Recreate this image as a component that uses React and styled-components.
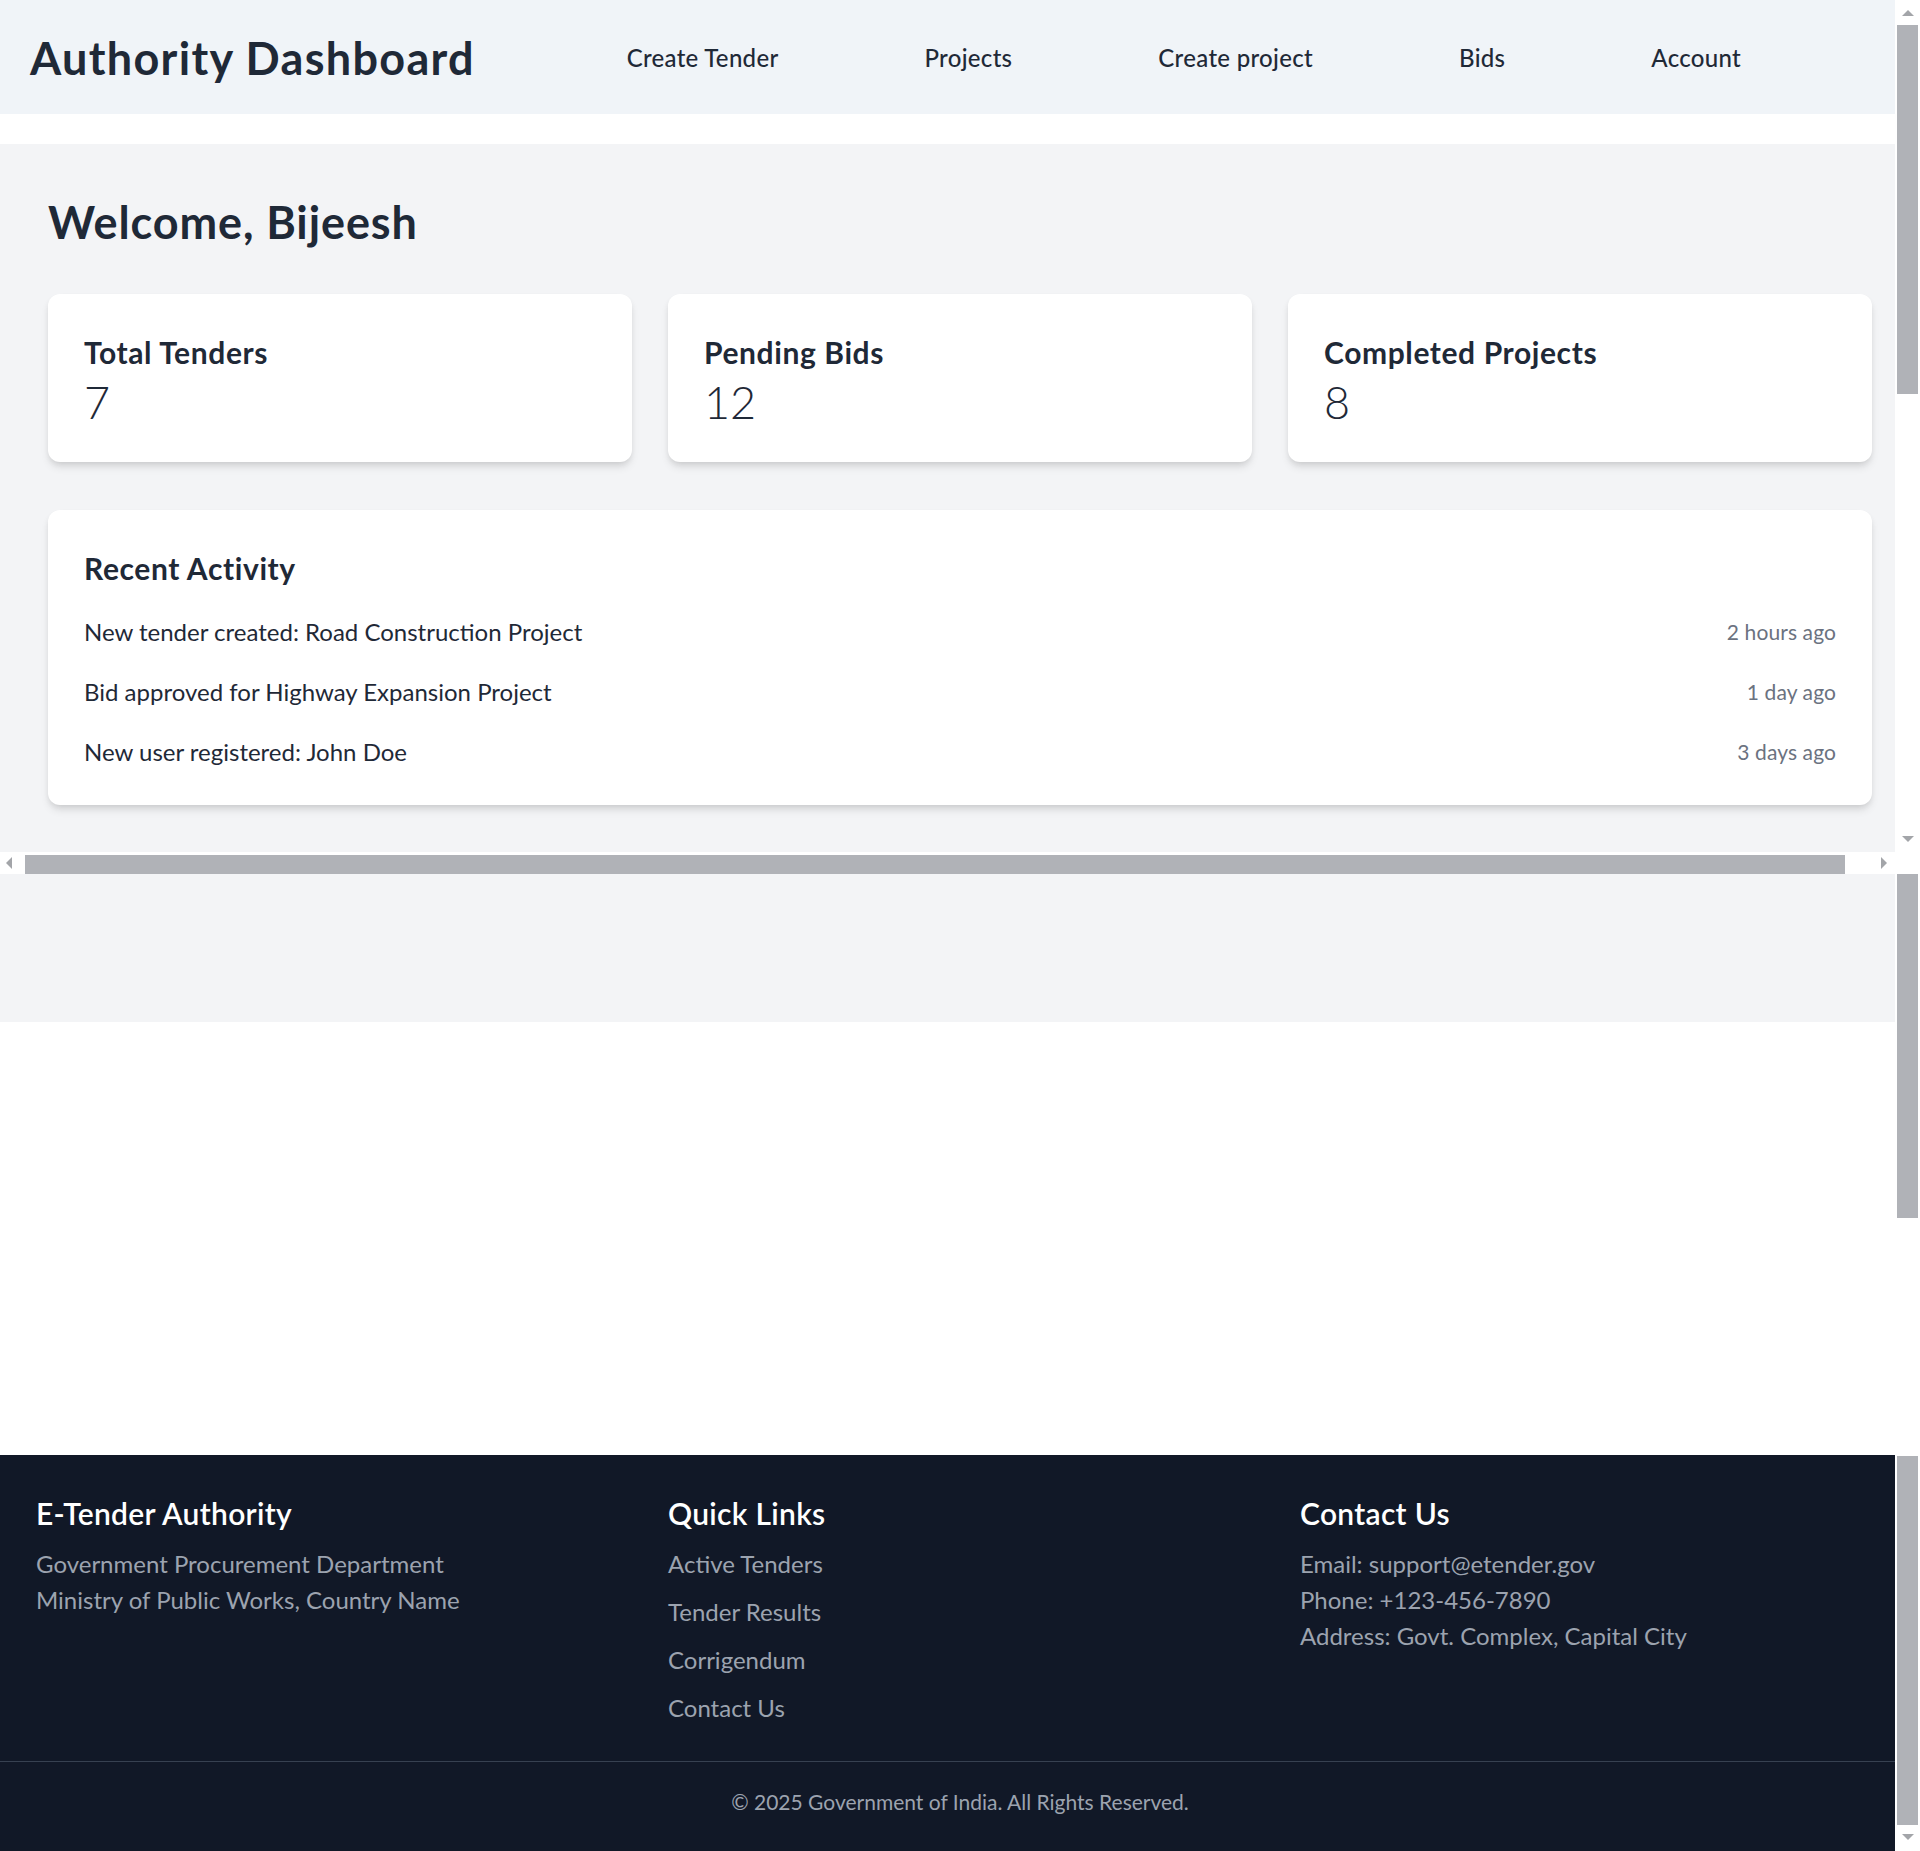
import React from "react";
import styled, { createGlobalStyle } from "styled-components";

const GlobalStyle = createGlobalStyle`
  html, body { margin: 0; padding: 0; background: #ffffff; }
  body {
    font-family: "Segoe UI", Lato, "Noto Sans", sans-serif;
    color: #1f2937;
    overflow: hidden;
  }
  * { box-sizing: border-box; }
  h1, h2, h3, h4, p, ul { margin: 0; padding: 0; }
  ul { list-style: none; }
`;

const Page = styled.div`
  position: relative;
  width: 1920px;
  min-height: 1851px;
  display: flex;
  flex-direction: column;
  overflow: hidden;
`;

const Header = styled.header`
  height: 114px;
  background: #f0f4f8;
  display: flex;
  align-items: center;
  padding-left: 30px;
  padding-top: 2px;
`;

const Title = styled.h1`
  font-size: 45px;
  line-height: 54px;
  font-weight: 700;
  color: #1f2937;
  letter-spacing: 1.3px;
`;

const Nav = styled.nav`
  margin-left: auto;
  padding-right: 179px;
  display: flex;
  gap: 146px;
`;

const NavLink = styled.a`
  font-size: 24px;
  line-height: 36px;
  font-weight: 500;
  color: #1f2937;
  text-decoration: none;
  letter-spacing: 0.3px;
`;

const Main = styled.main`
  margin-top: 30px;
  min-height: 878px;
  background: #f3f4f6;
  padding: 48px;
`;

const Welcome = styled.h2`
  font-size: 45px;
  line-height: 54px;
  font-weight: 700;
  color: #1f2937;
  letter-spacing: 0.9px;
  padding-top: 3px;
  margin-bottom: 45px;
`;

const CardGrid = styled.div`
  display: grid;
  grid-template-columns: repeat(3, 1fr);
  gap: 36px;
  margin-bottom: 48px;
`;

const Card = styled.section`
  background: #ffffff;
  border-radius: 12px;
  box-shadow: 0 6px 9px -1px rgba(0, 0, 0, 0.1), 0 3px 6px -2px rgba(0, 0, 0, 0.1);
  padding: 37px 36px 35px;
`;

const CardTitle = styled.h3`
  font-size: 30px;
  line-height: 42px;
  font-weight: 700;
  color: #1f2937;
  letter-spacing: 0.6px;
`;

const StatValue = styled.p`
  font-size: 45px;
  line-height: 54px;
  font-weight: 300;
  color: #1f2937;
  padding-top: 2px;
  margin-bottom: -2px;
`;

const ActivityList = styled.ul`
  margin-top: 25px;
  display: flex;
  flex-direction: column;
  gap: 24px;
`;

const ActivityRow = styled.li`
  display: flex;
  justify-content: space-between;
  align-items: center;
  height: 36px;
`;

const ActivityText = styled.span`
  font-size: 24px;
  line-height: 36px;
  color: #1f2937;
`;

const ActivityTime = styled.span`
  font-size: 21px;
  line-height: 30px;
  color: #6b7280;
  letter-spacing: 0.1px;
`;

const Footer = styled.footer`
  margin-top: auto;
  background: #111827;
  color: #ffffff;
`;

const FooterGrid = styled.div`
  padding: 37px 36px 0;
  display: grid;
  grid-template-columns: repeat(3, 1fr);
  gap: 48px;
`;

const FooterHeading = styled.h4`
  font-size: 30px;
  line-height: 42px;
  font-weight: 600;
  color: #ffffff;
  margin-bottom: 12px;
  letter-spacing: 0.3px;
`;

const FooterText = styled.p`
  font-size: 24px;
  line-height: 36px;
  color: #9ca3af;
`;

const FooterLinks = styled.ul`
  display: flex;
  flex-direction: column;
  gap: 12px;
`;

const FooterLink = styled.a`
  display: block;
  font-size: 24px;
  line-height: 36px;
  color: #9ca3af;
  text-decoration: none;
`;

const FooterBottom = styled.div`
  margin-top: 35px;
  border-top: 1px solid #374151;
  padding: 25px 0 34px;
  text-align: center;
  font-size: 21px;
  line-height: 30px;
  color: #9ca3af;
`;

/* Browser scrollbar chrome that lies over the page content */
const VRail = styled.div`
  position: absolute;
  top: 0;
  right: 0;
  width: 25px;
  height: 100%;
  background: #ffffff;
`;

const VThumb = styled.div`
  position: absolute;
  left: 2px;
  width: 21px;
  top: ${(p) => p.$top}px;
  height: ${(p) => p.$h}px;
  background: #b0b2b7;
`;

const Arrow = styled.div`
  position: absolute;
  width: 0;
  height: 0;
  left: ${(p) => p.$x}px;
  top: ${(p) => p.$y}px;
  ${(p) =>
    p.$dir === "up"
      ? "border-left: 6px solid transparent; border-right: 6px solid transparent; border-bottom: 6px solid #a3a5a9;"
      : p.$dir === "down"
      ? "border-left: 6px solid transparent; border-right: 6px solid transparent; border-top: 6px solid #a3a5a9;"
      : p.$dir === "left"
      ? "border-top: 6px solid transparent; border-bottom: 6px solid transparent; border-right: 6px solid #a3a5a9;"
      : "border-top: 6px solid transparent; border-bottom: 6px solid transparent; border-left: 6px solid #a3a5a9;"}
`;

const HRail = styled.div`
  position: absolute;
  left: 0;
  top: 852px;
  width: 1895px;
  height: 22px;
  background: #ffffff;
`;

const HThumb = styled.div`
  position: absolute;
  left: 25px;
  top: 3px;
  width: 1820px;
  height: 19px;
  background: #b0b2b7;
`;

const navItems = ["Create Tender", "Projects", "Create project", "Bids", "Account"];

const stats = [
  { label: "Total Tenders", value: 7 },
  { label: "Pending Bids", value: 12 },
  { label: "Completed Projects", value: 8 },
];

const activities = [
  { text: "New tender created: Road Construction Project", time: "2 hours ago" },
  { text: "Bid approved for Highway Expansion Project", time: "1 day ago" },
  { text: "New user registered: John Doe", time: "3 days ago" },
];

const quickLinks = ["Active Tenders", "Tender Results", "Corrigendum", "Contact Us"];

export default function App() {
  return (
    <>
      <GlobalStyle />
      <Page>
        <Header>
          <Title>Authority Dashboard</Title>
          <Nav>
            {navItems.map((n) => (
              <NavLink key={n} href="#">
                {n}
              </NavLink>
            ))}
          </Nav>
        </Header>

        <Main>
          <Welcome>Welcome, Bijeesh</Welcome>
          <CardGrid>
            {stats.map((s) => (
              <Card key={s.label}>
                <CardTitle>{s.label}</CardTitle>
                <StatValue>{s.value}</StatValue>
              </Card>
            ))}
          </CardGrid>
          <Card>
            <CardTitle>Recent Activity</CardTitle>
            <ActivityList>
              {activities.map((a) => (
                <ActivityRow key={a.text}>
                  <ActivityText>{a.text}</ActivityText>
                  <ActivityTime>{a.time}</ActivityTime>
                </ActivityRow>
              ))}
            </ActivityList>
          </Card>
        </Main>

        <Footer>
          <FooterGrid>
            <div>
              <FooterHeading>E-Tender Authority</FooterHeading>
              <FooterText>Government Procurement Department</FooterText>
              <FooterText>Ministry of Public Works, Country Name</FooterText>
            </div>
            <div>
              <FooterHeading>Quick Links</FooterHeading>
              <FooterLinks>
                {quickLinks.map((l) => (
                  <li key={l}>
                    <FooterLink href="#">{l}</FooterLink>
                  </li>
                ))}
              </FooterLinks>
            </div>
            <div>
              <FooterHeading>Contact Us</FooterHeading>
              <FooterText>Email: support@etender.gov</FooterText>
              <FooterText>Phone: +123-456-7890</FooterText>
              <FooterText>Address: Govt. Complex, Capital City</FooterText>
            </div>
          </FooterGrid>
          <FooterBottom>© 2025 Government of India. All Rights Reserved.</FooterBottom>
        </Footer>

        <HRail>
          <HThumb />
          <Arrow $dir="left" $x={6} $y={5} />
          <Arrow $dir="right" $x={1881} $y={5} />
        </HRail>
        <VRail>
          <Arrow $dir="up" $x={7} $y={10} />
          <VThumb $top={25} $h={369} />
          <Arrow $dir="down" $x={7} $y={836} />
          <VThumb $top={874} $h={344} />
          <VThumb $top={1456} $h={369} />
          <Arrow $dir="down" $x={7} $y={1834} />
        </VRail>
      </Page>
    </>
  );
}
